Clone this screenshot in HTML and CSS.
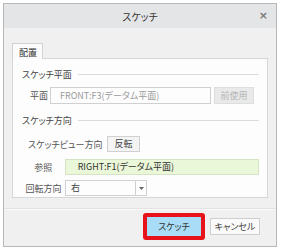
FILE: index.html
```html
<!DOCTYPE html>
<html lang="ja">
<head>
<meta charset="utf-8">
<link rel="stylesheet" href="styles.css">
</head>
<body>
<div class="dialog">
  <div class="titlebar">
    <span class="title">スケッチ</span>
    <span class="close">×</span>
  </div>
  <div class="content">
    <div class="tab">配置</div>
    <div class="panel">
      <div class="section first"><span>スケッチ平面</span><i class="rule"></i></div>
      <div class="row plane">
        <span class="lbl lbl-plane">平面</span>
        <div class="field disabled">FRONT:F3(データム平面)</div>
        <div class="btn btn-dis">前使用</div>
      </div>
      <div class="section second"><span>スケッチ方向</span><i class="rule"></i></div>
      <div class="row view">
        <span class="lbl lbl-view">スケッチビュー方向</span>
        <div class="btn btn-flip">反転</div>
      </div>
      <div class="row ref">
        <span class="lbl lbl-col">参照</span>
        <div class="field green">RIGHT:F1(データム平面)</div>
      </div>
      <div class="row rot">
        <span class="lbl lbl-col">回転方向</span>
        <div class="select"><span class="sel-text">右</span><span class="sel-arrow"><svg width="5" height="3" viewBox="0 0 5 3"><path d="M0 0H5L2.5 3Z" fill="#666"/></svg></span></div>
      </div>
    </div>
  </div>
  <div class="footer">
    <div class="ok-wrap"><div class="btn-ok">スケッチ</div></div>
    <div class="btn-cancel">キャンセル</div>
  </div>
</div>
</body>
</html>
```

FILE: styles.css
```css
html, body {
  margin: 0;
  padding: 0;
  background: #ffffff;
}
body {
  font-family: "Noto Sans CJK JP", "Noto Sans", sans-serif;
  font-size: 9px;
  font-feature-settings: "palt";
  color: #444;
  white-space: nowrap;
}
.dialog {
  margin: 3px 0 0 3px;
  width: 272px;
  height: 242px;
  border: 1px solid #b8b8b8;
  background: #f0f0f1;
  display: flex;
  flex-direction: column;
}
.titlebar {
  height: 24px;
  background: #e4e5e6;
  position: relative;
  display: flex;
  align-items: center;
  justify-content: center;
}
.title {
  font-size: 10px;
  color: #333;
}
.close {
  position: absolute;
  right: 8px;
  top: 5px;
  font-family: "DejaVu Sans", sans-serif;
  font-size: 11px;
  font-weight: bold;
  color: #777;
}
.content {
  padding: 14px 0 0 8px;
}
.tab {
  width: 31px;
  height: 16px;
  border: 1px solid #d2d2d2;
  border-bottom: none;
  background: #fbfbfb;
  box-sizing: border-box;
  padding: 3px 0 0 6px;
  line-height: 12px;
  color: #333;
  position: relative;
  top: 1px;
}
.panel {
  width: 256px;
  height: 140px;
  box-sizing: border-box;
  border: 1px solid #d6d6d6;
  background: #fdfdfd;
  padding: 0 8px 0 9px;
}
.section {
  display: flex;
  align-items: center;
  height: 16px;
  color: #444;
}
.section.first { margin-top: 7px; }
.section.second { margin-top: 8px; }
.rule {
  flex: 1;
  height: 1px;
  background: #dcdcdc;
  margin-left: 6px;
}
.row {
  display: flex;
  align-items: center;
}
.plane { margin-top: 5px; height: 17px; }
.view { margin-top: 8px; height: 16px; }
.ref { margin-top: 7px; height: 16px; }
.rot { margin-top: 5px; height: 16px; }
.lbl { color: #555; }
.lbl-plane { margin-left: 8px; width: 20px; }
.lbl-view { margin-left: 6px; width: 79px; }
.lbl-col { width: 43px; text-align: center; }
.field {
  box-sizing: border-box;
  height: 17px;
  line-height: 15px;
  border: 1px solid #d0d0d0;
  padding-left: 9px;
  white-space: nowrap;
}
.field.disabled {
  width: 161px;
  background: #fdfdfd;
  color: #9a9a9a;
}
.field.green {
  height: 16px;
  line-height: 14px;
  width: 196px;
  background: #eaf7d8;
  border-color: #d5e3c4;
  color: #333;
  padding-left: 12px;
}
.btn {
  box-sizing: border-box;
  border: 1px solid #d0d0d0;
  text-align: center;
}
.btn-dis {
  margin-left: 3px;
  width: 40px;
  height: 17px;
  line-height: 15px;
  background: #e9e9e9;
  color: #b5b5b5;
  border-color: #dedede;
}
.btn-flip {
  width: 33px;
  height: 16px;
  line-height: 14px;
  background: #f4f4f4;
  color: #444;
}
.select {
  box-sizing: border-box;
  width: 82px;
  height: 16px;
  border: 1px solid #d0d0d0;
  background: #fdfdfd;
  display: flex;
}
.sel-text {
  flex: 1;
  padding-left: 5px;
  line-height: 14px;
  color: #444;
}
.sel-arrow {
  width: 10px;
  border-left: 1px solid #d0d0d0;
  display: flex;
  align-items: center;
  justify-content: center;
}
.footer {
  margin-top: 11px;
  border-top: 1px solid #fafafa;
  box-shadow: 0 -1px 0 #e2e2e2;
  flex: 1;
  display: flex;
  justify-content: flex-end;
  align-items: flex-start;
  padding: 3px 16px 0 0;
}
.ok-wrap {
  border: 3px solid #e8131a;
  border-radius: 3px;
  padding: 1px;
  background: #e8131a;
}
.btn-ok {
  width: 54px;
  height: 19px;
  line-height: 19px;
  text-align: center;
  background: #a9dcf7;
  color: #333;
}
.btn-cancel {
  margin: 5px 0 0 5px;
  box-sizing: border-box;
  width: 50px;
  height: 17px;
  line-height: 15px;
  text-align: center;
  background: #fafafa;
  border: 1px solid #cfcfcf;
  color: #444;
}
```
